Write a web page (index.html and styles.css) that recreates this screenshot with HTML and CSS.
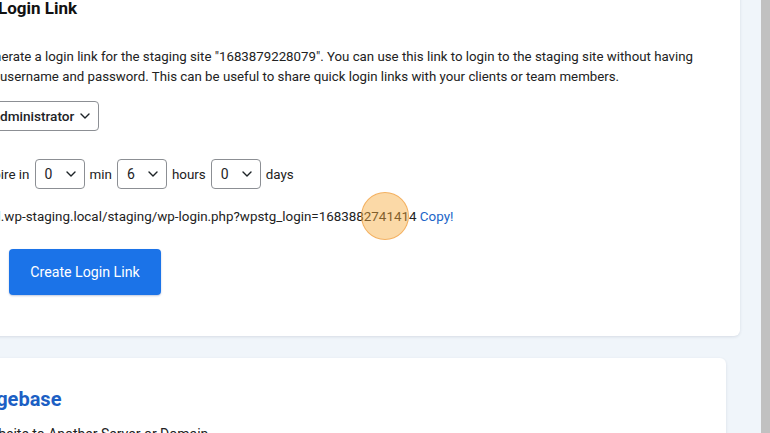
FILE: index.html
```html
<!DOCTYPE html>
<html lang="en">
<head>
<meta charset="utf-8">
<title>Login Link</title>
<link rel="stylesheet" href="styles.css">
</head>
<body>
<div class="page">
  <main class="main">
    <section class="card card-login">
      <h2 class="title">Login Link</h2>
      <p class="desc">Generate a login link for the staging site "1683879228079". You can use this link to login to the staging site without having the username and password. This can be useful to share quick login links with your clients or team members.</p>
      <div class="role-row">
        <div class="select select-role"><span>Administrator</span><svg class="chev" viewBox="0 0 10 6" width="10" height="6"><path d="M1 1l4 4 4-4" fill="none" stroke="#1d2327" stroke-width="1.4" stroke-linecap="round" stroke-linejoin="round"/></svg></div>
      </div>
      <div class="expire-row">
        <span class="lbl">Expire in</span>
        <div class="select select-num"><span>0</span><svg class="chev" viewBox="0 0 10 6" width="10" height="6"><path d="M1 1l4 4 4-4" fill="none" stroke="#1d2327" stroke-width="1.4" stroke-linecap="round" stroke-linejoin="round"/></svg></div>
        <span class="lbl">min</span>
        <div class="select select-num"><span>6</span><svg class="chev" viewBox="0 0 10 6" width="10" height="6"><path d="M1 1l4 4 4-4" fill="none" stroke="#1d2327" stroke-width="1.4" stroke-linecap="round" stroke-linejoin="round"/></svg></div>
        <span class="lbl">hours</span>
        <div class="select select-num"><span>0</span><svg class="chev" viewBox="0 0 10 6" width="10" height="6"><path d="M1 1l4 4 4-4" fill="none" stroke="#1d2327" stroke-width="1.4" stroke-linecap="round" stroke-linejoin="round"/></svg></div>
        <span class="lbl">days</span>
      </div>
      <p class="link-line"><span class="url">https://local.wp-staging.local/staging/wp-login.php?wpstg_login=1683882741414</span> <a class="copy" href="#">Copy!</a></p>
      <button class="btn" type="button">Create Login Link</button>
    </section>
    <section class="card card-kb">
      <h3 class="kb-title">Knowledgebase</h3>
      <p class="kb-item">Move Website to Another Server or Domain</p>
    </section>
  </main>
  <div class="scrollbar"></div>
  <div class="click-dot"></div>
</div>
</body>
</html>
```
FILE: styles.css
```css
html, body {
  margin: 0;
  padding: 0;
}
body {
  background: #f0f5fa;
  font-family: Roboto, "Liberation Sans", Arial, sans-serif;
  color: #1d2327;
  overflow: hidden;
}
.page {
  position: relative;
  display: flex;
  width: 770px;
  height: 433px;
  overflow: hidden;
}
.main {
  flex: 1;
  display: flex;
  flex-direction: column;
  gap: 22px;
  margin-left: -60px;
  margin-top: -30px;
  min-width: 0;
}
.card {
  background: #ffffff;
  border-radius: 6px;
  box-shadow: 0 1px 3px rgba(30, 50, 80, 0.12);
}
.card-login {
  margin-right: 21px;
  padding: 26px 40px 41px 38px;
}
.title {
  margin: 0 0 0 20px;
  font-size: 17px;
  line-height: 24px;
  font-weight: 700;
  color: #111;
}
.desc {
  margin: 27px 0 0;
  font-size: 13.27px;
  line-height: 19.5px;
  color: #222;
}
.role-row {
  margin-top: 15px;
  display: flex;
}
.select {
  display: inline-flex;
  align-items: center;
  justify-content: space-between;
  box-sizing: border-box;
  height: 30px;
  border: 1px solid #8c8f94;
  border-radius: 4px;
  background: #fff;
  color: #1d2327;
}
.select-role {
  margin-left: 4px;
  padding: 0 8px 0 8px;
  gap: 6px;
  font-size: 13.6px;
  font-weight: 500;
}
.select-num {
  width: 50px;
  padding: 0 8px 0 9px;
  font-size: 14px;
}
.chev {
  display: block;
  flex: none;
}
.expire-row {
  margin-top: 28px;
  margin-left: 1px;
  display: flex;
  align-items: center;
  gap: 5px;
  font-size: 13.4px;
  color: #222;
}
.link-line {
  margin: 18px 0 0;
  font-size: 13.4px;
  line-height: 20px;
  color: #222;
  white-space: nowrap;
}
.url {
  margin-left: -49px;
}
.copy {
  color: #2065c8;
  text-decoration: none;
}
.btn {
  display: block;
  margin-top: 22px;
  margin-left: 31px;
  width: 152px;
  height: 46px;
  border: 0;
  border-radius: 4px;
  background: #1b73e8;
  color: #fff;
  font-family: Roboto, "Liberation Sans", Arial, sans-serif;
  font-size: 14.2px;
  box-shadow: 0 1px 2px rgba(0, 40, 120, 0.25);
}
.card-kb {
  margin-right: 35px;
  padding: 28px 20px 30px 0;
  flex: 1;
}
.kb-title {
  margin: 0;
  margin-left: -21px;
  font-size: 20px;
  line-height: 26px;
  font-weight: 700;
  color: #1c5fc4;
}
.kb-item {
  margin: 12px 0 0 1px;
  font-size: 14px;
  line-height: 20px;
  color: #222;
}
.scrollbar {
  flex: none;
  width: 9px;
  background: #c1c1c1;
}
.click-dot {
  position: absolute;
  left: 361px;
  top: 192px;
  width: 48px;
  height: 48px;
  box-sizing: border-box;
  border-radius: 50%;
  background: rgba(247, 170, 60, 0.45);
  border: 1.5px solid rgba(238, 150, 50, 0.6);
}
```
